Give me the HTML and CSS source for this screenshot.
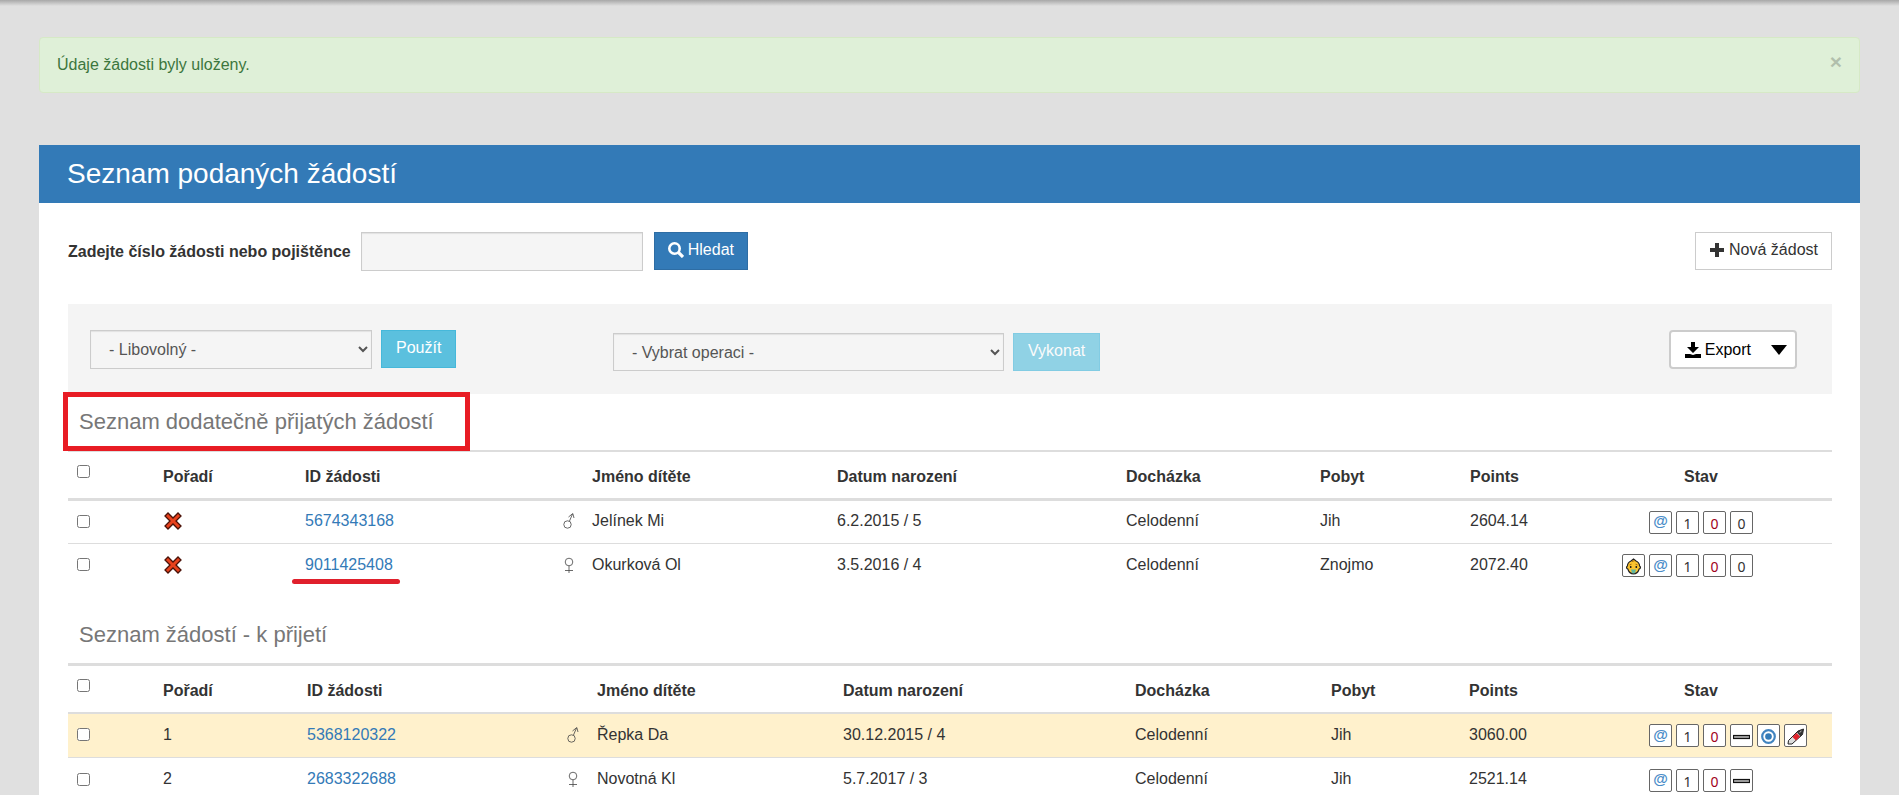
FILE: index.html
```html
<!DOCTYPE html>
<html lang="cs">
<head>
<meta charset="utf-8">
<title>Seznam podaných žádostí</title>
<link rel="stylesheet" href="styles.css">
</head>
<body>
<svg class="defs" aria-hidden="true">
  <symbol id="cross" viewBox="0 0 18 18"><path d="M1 4 4 1 9 6 14 1 17 4 12 9 17 14 14 17 9 12 4 17 1 14 6 9Z" fill="#e8411c" stroke="#4a1208" stroke-width="1.3"/></symbol>
  <symbol id="male" viewBox="0 0 12 18"><circle cx="4.500" cy="12.500" r="3.700"/><path d="M6.500 9 9.500 2M5.500 5 9.800 1.500 11 6"/></symbol>
  <symbol id="female" viewBox="0 0 12 18"><circle cx="6" cy="6" r="3.800"/><path d="M6 10v7M2 14.500h8"/></symbol>
  <symbol id="baby" viewBox="0 0 17 17"><path d="M8.500 1 11 3c2.500 1 3.500 3 3.600 5 1.400.8 1 2.700-.4 3-.9 2.800-3 4.800-5.700 4.800s-4.800-2-5.700-4.800c-1.400-.3-1.800-2.200-.4-3C2.500 6 3.500 4 6 3Z" fill="#fcc42e" stroke="#222" stroke-width="1.200"/><path d="M7 3.500 10 2.500M4.500 7l2-.8M12.500 7l-2-.8" fill="none" stroke="#a86a10"/><circle cx="5.700" cy="9" r=".9" fill="#111"/><circle cx="11.300" cy="9" r=".9" fill="#111"/><path d="M6 11.500h5l-1 3.700H7Z" fill="#5fb8a0"/></symbol>
  <symbol id="dash" viewBox="0 0 17 17"><rect x=".5" y="7.500" width="16" height="3" fill="#aaa" stroke="#111" stroke-width="1.200"/></symbol>
  <symbol id="target" viewBox="0 0 17 17"><circle cx="8.500" cy="8.500" r="6.300" fill="#fff" stroke="#4184c0" stroke-width="2.200"/><circle cx="8.500" cy="8.500" r="3.300" fill="#337ab7"/></symbol>
  <symbol id="marker" viewBox="0 0 17 17"><path d="M1 16 1.500 12.500 11 3l5.500-2-1 5.500L5 16Z" fill="#ddd" stroke="#222"/><path d="m5.500 9 4-4 3.500 3.500-4 4Z" fill="#e0222b"/><path d="m11 3 5.500-2-1 5.500-2 2-3.500-4Z" fill="#333"/><path d="m12.500 4.500 2-1.500" stroke="#bbb"/></symbol>
</svg>
<div class="top-shadow"></div>
<main class="page">
  <div class="alert" role="status"><span>Údaje žádosti byly uloženy.</span><button class="close" type="button" aria-label="Zavřít">×</button></div>
  <section class="panel">
    <h1 class="panel-title">Seznam podaných žádostí</h1>
    <div class="panel-body">
      <form class="search">
        <label for="query">Zadejte číslo žádosti nebo pojištěnce</label>
        <input class="field field-md" id="query" type="text">
        <button class="btn btn-primary" type="button"><svg class="icon" viewBox="0 0 16 16"><circle cx="6.500" cy="6.500" r="5.200" fill="none" stroke="currentColor" stroke-width="2.600"/><path d="m10 10 5 5" stroke="currentColor" stroke-width="3.200"/></svg>Hledat</button>
        <button class="btn btn-default push" type="button"><svg class="icon" viewBox="0 0 16 16"><path d="M6 1h4v5h5v4h-5v5H6v-5H1V6h5Z" fill="currentColor"/></svg>Nová žádost</button>
      </form>
      <div class="toolbar">
        <div class="tool-group filter">
          <select class="field field-md" aria-label="Filtr"><option>- Libovolný -</option></select>
          <button class="btn btn-info" type="button">Použít</button>
        </div>
        <div class="tool-group operation">
          <select class="field field-lg" aria-label="Operace"><option>- Vybrat operaci -</option></select>
          <button class="btn btn-info" type="button" disabled>Vykonat</button>
        </div>
        <button class="btn btn-export push" type="button"><svg class="icon" viewBox="0 0 16 16"><path d="M6 0h4v5h4L8 11 2 5h4ZM0 12h5l3 1 3-1h5v4H0Z" fill="currentColor"/></svg>Export<svg class="caret" viewBox="0 0 16 10"><path d="M0 0h16L8 10Z" fill="currentColor"/></svg></button>
      </div>

      <h2 class="list-title"><span class="marked">Seznam dodatečně přijatých žádostí</span></h2>
      <table class="list list-extra">
        <thead><tr><th class="c-check"><input type="checkbox" aria-label="Vybrat vše"></th><th class="c-order">Pořadí</th><th class="c-id">ID žádosti</th><th class="c-sex"></th><th class="c-name">Jméno dítěte</th><th class="c-birth">Datum narození</th><th class="c-att">Docházka</th><th class="c-stay">Pobyt</th><th class="c-points">Points</th><th class="c-state">Stav</th></tr></thead>
        <tbody>
          <tr><td><input type="checkbox" aria-label="Vybrat 5674343168"></td><td><svg class="cross"><use href="#cross"/></svg></td><td><a href="#">5674343168</a></td><td><svg class="sex"><use href="#male"/></svg></td><td>Jelínek Mi</td><td>6.2.2015 / 5</td><td>Celodenní</td><td>Jih</td><td>2604.14</td><td><div class="badges"><span class="slot"></span><span class="badge at">@</span><span class="badge">1</span><span class="badge red">0</span><span class="badge">0</span></div></td></tr>
          <tr><td><input type="checkbox" aria-label="Vybrat 9011425408"></td><td><svg class="cross"><use href="#cross"/></svg></td><td><a class="underlined" href="#">9011425408</a></td><td><svg class="sex"><use href="#female"/></svg></td><td>Okurková Ol</td><td>3.5.2016 / 4</td><td>Celodenní</td><td>Znojmo</td><td>2072.40</td><td><div class="badges"><span class="badge"><svg><use href="#baby"/></svg></span><span class="badge at">@</span><span class="badge">1</span><span class="badge red">0</span><span class="badge">0</span></div></td></tr>
        </tbody>
      </table>

      <h2 class="list-title list-title-next">Seznam žádostí - k přijetí</h2>
      <table class="list list-accept">
        <thead><tr><th class="c-check"><input type="checkbox" aria-label="Vybrat vše"></th><th class="c-order">Pořadí</th><th class="c-id">ID žádosti</th><th class="c-sex"></th><th class="c-name">Jméno dítěte</th><th class="c-birth">Datum narození</th><th class="c-att">Docházka</th><th class="c-stay">Pobyt</th><th class="c-points">Points</th><th class="c-state">Stav</th></tr></thead>
        <tbody>
          <tr class="highlight"><td><input type="checkbox" aria-label="Vybrat 5368120322"></td><td>1</td><td><a href="#">5368120322</a></td><td><svg class="sex"><use href="#male"/></svg></td><td>Řepka Da</td><td>30.12.2015 / 4</td><td>Celodenní</td><td>Jih</td><td>3060.00</td><td><div class="badges"><span class="slot"></span><span class="badge at">@</span><span class="badge">1</span><span class="badge red">0</span><span class="badge"><svg><use href="#dash"/></svg></span><span class="badge"><svg><use href="#target"/></svg></span><span class="badge"><svg><use href="#marker"/></svg></span></div></td></tr>
          <tr><td><input type="checkbox" aria-label="Vybrat 2683322688"></td><td>2</td><td><a href="#">2683322688</a></td><td><svg class="sex"><use href="#female"/></svg></td><td>Novotná Kl</td><td>5.7.2017 / 3</td><td>Celodenní</td><td>Jih</td><td>2521.14</td><td><div class="badges"><span class="slot"></span><span class="badge at">@</span><span class="badge">1</span><span class="badge red">0</span><span class="badge"><svg><use href="#dash"/></svg></span></div></td></tr>
        </tbody>
      </table>
    </div>
  </section>
</main>
</body>
</html>
```
FILE: styles.css
```css
* { box-sizing: border-box; }
body { margin: 0; height: 100vh; overflow: hidden; background: #e0e0e0; color: #333; font: 16px/24px "Liberation Sans", Arial, sans-serif; }
.defs { position: absolute; width: 0; height: 0; }
.top-shadow { position: absolute; top: 0; left: 0; right: 0; height: 6px; background: linear-gradient(#a8a8a8, #e0e0e0); }
.page { height: 100%; overflow: hidden; padding: 37px 39px 0; }

.alert { display: flex; justify-content: space-between; align-items: flex-start; margin: 0 0 52px; padding: 15px 17px; min-height: 56px; background: #dff0d8; border: 1px solid #d6e9c6; border-radius: 4px; color: #3c763d; }
.close { padding: 0; border: 0; background: none; color: #000; opacity: .2; font: bold 21px/18px "Liberation Sans", Arial, sans-serif; }

.panel { background: #fff; }
.panel-title { margin: 0; padding: 0 28px; background: #337ab7; color: #fff; font-size: 28px; font-weight: 400; line-height: 58px; }
.panel-body { padding: 29px 28px 40px 29px; }

.search { display: flex; align-items: flex-start; margin: 0 0 33px; }
.search label { margin-right: 10px; font-weight: 700; line-height: 39px; }
.field { height: 39px; padding: 0 14px; border: 1px solid #ccc; border-radius: 0; background: #f5f5f5; box-shadow: inset 0 1px 1px rgba(0, 0, 0, .08); color: #555; font: inherit; }
.field-md { width: 282px; margin-right: 11px; }
.field-lg { width: 391px; margin-right: 9px; }
.btn { display: inline-flex; align-items: center; gap: 4px; height: 38px; padding: 0 14px 2px; border: 1px solid; border-radius: 0; color: #fff; font: inherit; }
.btn-primary { padding: 0 13px 2px; background: #337ab7; border-color: #2e6da4; }
.btn-default { padding: 0 13px 2px; background: #fff; border-color: #ccc; color: #333; }
.btn-info { background: #5bc0de; border-color: #46b8da; }
.btn-info:disabled { opacity: .65; }
.btn-export { height: 39px; padding: 0 8px 0 14px; background: #fff; border: 2px solid #ccc; border-radius: 4px; color: #000; }
.push { margin-left: auto; }
.icon { width: 16px; height: 16px; }
.caret { width: 16px; height: 10px; margin-left: 16px; }

.toolbar { display: flex; align-items: flex-start; padding: 26px 35px 23px 22px; background: #f4f4f4; }
.tool-group { display: flex; }
.filter { width: 523px; }
.filter .field { margin-right: 9px; }
.operation { padding-top: 3px; }
.operation .field { height: 38px; }

.list-title { margin: 0; padding: 0 11px; color: #777; font-size: 22px; font-weight: 400; line-height: 56px; }
.list-title-next { margin-top: 20px; }
.marked { position: relative; }
.marked::after { content: ""; position: absolute; inset: -17px -36px -17px -16px; border: 5px solid #e81c24; pointer-events: none; }

.list { width: 100%; table-layout: fixed; border-collapse: separate; border-spacing: 0; border-top: 2px solid #ddd; }
.list th { height: 49px; padding: 12px 8px 8px; border-bottom: 3px solid #ddd; text-align: left; vertical-align: middle; white-space: nowrap; }
.list td { height: 43px; padding: 0 8px 2px; border-bottom: 1px solid #ddd; vertical-align: middle; }
.list tr:last-child td { border-bottom: 0; }
.list .c-check { padding-top: 0; }
.list .c-state { padding-left: 70px; }
.list-accept { border-top-width: 3px; }
.list-accept th { height: 48px; border-bottom-width: 2px; }
.list-accept td { height: 44px; }
.list input { display: block; width: 13px; height: 13px; margin: 0 0 0 1px; }
.list a { color: #337ab7; text-decoration: none; }
.highlight { background: #fff1cc; }

.c-check { width: 87px; }
.c-order { width: 142px; }
.c-state { width: 218px; }
.list-extra .c-sex { width: 29px; }
.list-extra .c-name { width: 245px; }
.list-extra .c-birth { width: 289px; }
.list-extra .c-att { width: 194px; }
.list-extra .c-stay { width: 150px; }
.list-extra .c-points { width: 152px; }
.list-accept .c-order { width: 144px; }
.list-accept .c-sex { width: 30px; }
.list-accept .c-name { width: 246px; }
.list-accept .c-birth { width: 292px; }
.list-accept .c-att { width: 196px; }
.list-accept .c-stay { width: 138px; }
.list-accept .c-points { width: 153px; }

.underlined { position: relative; }
.underlined::after { content: ""; position: absolute; left: -13px; right: -7px; top: 23px; height: 5px; border-radius: 3px; background: #e0202c; }
.cross { display: block; width: 18px; height: 18px; margin-left: 1px; }
.sex { display: block; width: 12px; height: 18px; fill: none; stroke: #444; stroke-width: .8; }
.badges { display: flex; gap: 4px; padding-top: 2px; }
.slot { width: 23px; }
.badge { display: flex; flex: none; align-items: center; justify-content: center; width: 23px; height: 23px; padding-top: 3px; border: 1px solid #666; border-radius: 2px; background: #fff; color: #333; font: 14px/18px "Noto Sans", "DejaVu Sans", sans-serif; }
.badge svg { width: 17px; height: 17px; margin-top: -2px; }
.badge.at { padding: 0 0 2px; color: #4a8cc8; font-family: "Liberation Sans", Arial, sans-serif; font-size: 15px; font-weight: 700; }
.badge.red { color: #a00020; }
```
